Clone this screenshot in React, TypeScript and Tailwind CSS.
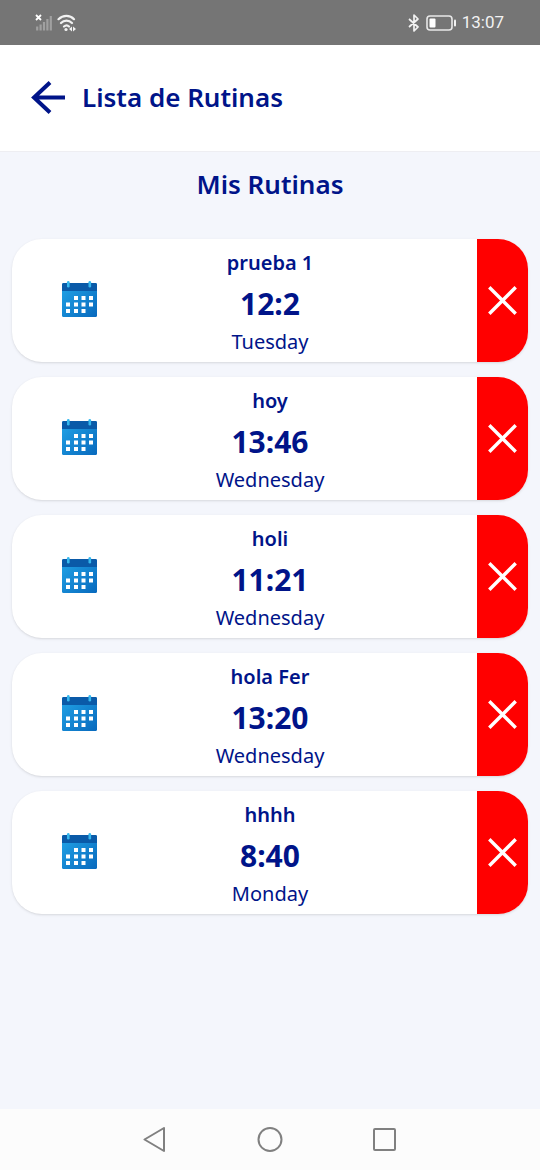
import React from "react";

interface Routine {
  name: string;
  time: string;
  day: string;
}

const routines: Routine[] = [
  { name: "prueba 1", time: "12:2", day: "Tuesday" },
  { name: "hoy", time: "13:46", day: "Wednesday" },
  { name: "holi", time: "11:21", day: "Wednesday" },
  { name: "hola Fer", time: "13:20", day: "Wednesday" },
  { name: "hhhh", time: "8:40", day: "Monday" },
];

const calendarDots = [
  [12, 15],
  [19.5, 15],
  [27, 15],
  [4, 21.5],
  [12, 21.5],
  [19.5, 21.5],
  [27, 21.5],
  [4, 28],
  [12, 28],
  [19.5, 28],
];

const CalendarIcon = () => (
  <svg width="35" height="37" viewBox="0 0 35 37" aria-hidden="true">
    <defs>
      <linearGradient id="calendarBody" x1="0" y1="0" x2="1" y2="1">
        <stop offset="0" stopColor="#22a5e8" />
        <stop offset="1" stopColor="#0869bd" />
      </linearGradient>
    </defs>
    <rect y="2" width="35" height="34" rx="1.5" fill="url(#calendarBody)" />
    <path d="M0 10V3.500a1.500 1.500 0 0 1 1.500-1.500h32a1.500 1.500 0 0 1 1.500 1.500V10z" fill="#0a5aa8" />
    <rect x="5" width="2.6" height="6.500" rx="1.3" fill="#35b8ee" />
    <rect x="26.500" width="2.6" height="6.500" rx="1.3" fill="#35b8ee" />
    {calendarDots.map(([x, y]) => (
      <rect key={`${x}-${y}`} x={x} y={y} width="4" height="4" fill="#fff" />
    ))}
  </svg>
);

const StatusBar = () => (
  <div className="flex h-[45px] items-center justify-between bg-[#757575] pl-[35px] pr-9">
    <div className="flex items-center gap-1">
      <svg width="18" height="18" viewBox="0 0 18 18" aria-hidden="true">
        <path d="M1 1l5 5M6 1l-5 5" stroke="#fff" strokeWidth="1.8" />
        <path
          d="M2.2 12.500v4M5.600 10.500v6M9 8v8.500M12.400 5v11.500M15.800 2v14.500"
          stroke="#a0a0a0"
          strokeWidth="2.2"
        />
      </svg>
      <svg
        width="20"
        height="18"
        viewBox="0 0 20 18"
        fill="none"
        stroke="#f2f2f2"
        strokeWidth="2.2"
        strokeLinecap="round"
        aria-hidden="true"
      >
        <path d="M1.500 5.2C6 .8 13 .8 17 5.2M4 9c3-3.2 8-3.2 11 0M7 12.500c1.700-1.500 3.500-1.500 5 0" />
        <circle cx="9" cy="15.500" r="1.600" fill="#f2f2f2" stroke="none" />
        <path d="M15 12.500v5l-3-2.500zM16 12.500v5l3-2.500z" fill="#f2f2f2" stroke="none" />
      </svg>
    </div>
    <div className="flex items-center gap-1.5">
      <svg
        width="12"
        height="18"
        viewBox="0 0 12 18"
        fill="none"
        stroke="#f2f2f2"
        strokeWidth="1.7"
        strokeLinejoin="round"
        aria-hidden="true"
      >
        <path d="M1 5l9 8-4 4V1l4 4-9 8" />
      </svg>
      <svg width="30" height="16" viewBox="0 0 30 16" aria-hidden="true">
        <rect x="1" y="1" width="25" height="14" rx="3" fill="none" stroke="#e8e8e8" strokeWidth="1.6" />
        <rect x="3.500" y="3.500" width="6" height="9" rx="1" fill="#fff" />
        <rect x="28" y="4.500" width="2" height="7" rx="1" fill="#f2f2f2" />
      </svg>
      <span className="font-[Roboto,sans-serif] text-[17px] text-[#f2f2f2]">13:07</span>
    </div>
  </div>
);

const Header = () => (
  <header className="flex h-[107px] items-center gap-4 border-b border-[#eeeef2] bg-white px-[30px]">
    <button type="button" aria-label="Volver">
      <svg
        width="36"
        height="36"
        viewBox="0 0 36 36"
        fill="none"
        stroke="#001489"
        strokeWidth="4"
        aria-hidden="true"
      >
        <path d="M35 17.500H4M20 2.500L4 17.500l16 15" />
      </svg>
    </button>
    <h1 className="pb-0.5 text-[26px] font-semibold leading-8">Lista de Rutinas</h1>
  </header>
);

const RoutineCard = ({ name, time, day }: Routine) => (
  <li className="flex h-[123px] overflow-hidden rounded-[30px] bg-white shadow-sm">
    <div className="flex w-1/4 items-center justify-center pb-0.5 pl-1.5">
      <CalendarIcon />
    </div>
    <div className="flex flex-1 flex-col items-center justify-center">
      <h3 className="text-xl font-semibold leading-9">{name}</h3>
      <p className="text-3xl font-bold leading-[46px]">{time}</p>
      <p className="text-xl leading-[30px]">{day}</p>
    </div>
    <div className="flex w-1/4 justify-end">
      <button
        type="button"
        aria-label={`Eliminar ${name}`}
        className="flex w-[51px] items-center justify-center bg-[#ff0000]"
      >
        <svg
          width="29"
          height="29"
          viewBox="0 0 29 29"
          stroke="#fff"
          strokeWidth="3.4"
          strokeLinecap="square"
          aria-hidden="true"
        >
          <path d="M2.500 2.500l24 24M26.500 2.500l-24 24" />
        </svg>
      </button>
    </div>
  </li>
);

const NavigationBar = () => (
  <nav className="flex h-[61px] items-center justify-center gap-[89px] bg-[#fcfcfc]">
    <button type="button" aria-label="Atrás">
      <svg width="26" height="26" viewBox="0 0 26 26" fill="none" stroke="#808080" strokeWidth="2" strokeLinejoin="round">
        <path d="M22 1v23L2.500 12.500z" />
      </svg>
    </button>
    <button type="button" aria-label="Inicio">
      <svg width="26" height="26" viewBox="0 0 26 26" fill="none" stroke="#808080" strokeWidth="2">
        <circle cx="13" cy="12.500" r="11.500" />
      </svg>
    </button>
    <button type="button" aria-label="Recientes">
      <svg width="26" height="26" viewBox="0 0 26 26" fill="none" stroke="#808080" strokeWidth="2">
        <rect x="2" y="2" width="21" height="21" rx="1" />
      </svg>
    </button>
  </nav>
);

const App = () => {
  return (
    <div className="flex min-h-screen flex-col bg-[#f4f6fc] font-['Noto_Sans',sans-serif] text-[#001489]">
      <StatusBar />
      <Header />
      <main className="flex-1 px-3 pt-4">
        <h2 className="text-center text-[26px] font-semibold leading-8">Mis Rutinas</h2>
        <ul className="mt-[39px] flex flex-col gap-[15px]">
          {routines.map((routine) => (
            <RoutineCard key={routine.name} {...routine} />
          ))}
        </ul>
      </main>
      <NavigationBar />
    </div>
  );
};

export default App;
